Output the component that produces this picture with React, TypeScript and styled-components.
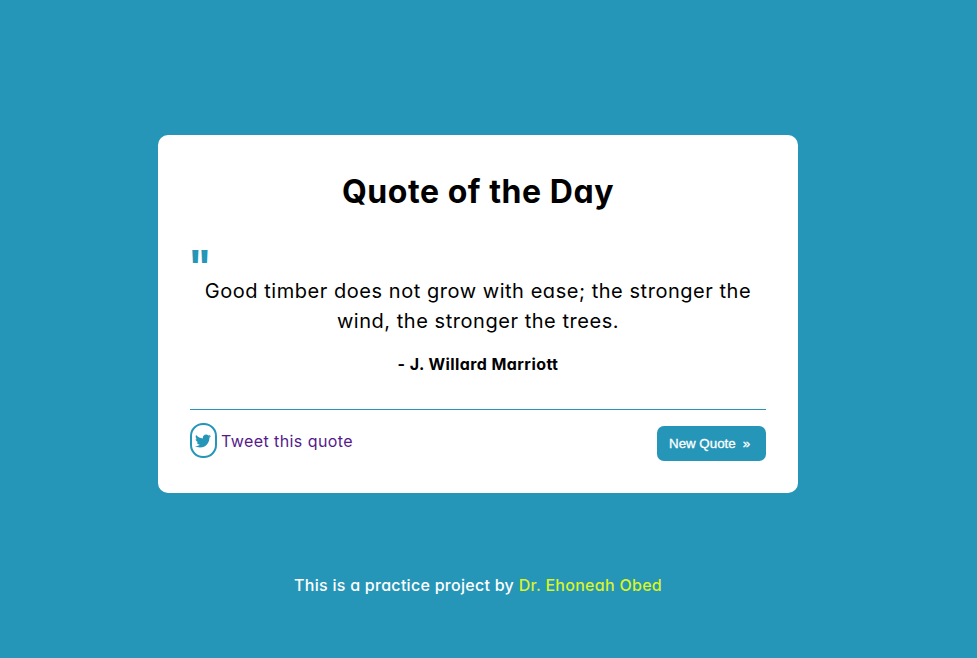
import React from 'react';
import styled, { createGlobalStyle } from 'styled-components';
import { FaTwitter } from 'react-icons/fa';

const teal = '#2596b7';

const GlobalStyle = createGlobalStyle`
  * { box-sizing: border-box; margin: 0; padding: 0; }
  body {
    background: ${teal};
    font-family: Inter, sans-serif;
    font-feature-settings: 'cv11' 1;
    color: #000;
  }
`;

const Page = styled.div`
  display: flex;
  flex-direction: column;
  align-items: center;
  width: 956px;
  height: 658px;
  padding-top: 135px;
`;

const Card = styled.main`
  width: 640px;
  height: 358px;
  padding: 33px 32px 32px;
  background: #fff;
  border-radius: 10px;
`;

const Title = styled.h1`
  font-size: 32px;
  line-height: 48px;
  font-weight: 700;
  letter-spacing: 0.55px;
  text-align: center;
`;

const QuoteMark = styled.div`
  height: 60px;
  margin-left: -2px;
  padding-top: 25px;
  font-size: 43px;
  line-height: 48px;
  font-weight: 650;
  color: ${teal};
`;

const QuoteText = styled.p`
  font-size: 20px;
  line-height: 30px;
  font-weight: 400;
  letter-spacing: 0.54px;
  text-align: center;
`;

const Author = styled.p`
  margin-top: 16px;
  font-size: 16px;
  line-height: 24px;
  font-weight: 650;
  letter-spacing: 0.42px;
  text-align: center;
`;

const Actions = styled.div`
  display: flex;
  align-items: flex-start;
  justify-content: space-between;
  margin-top: 33px;
  padding-top: 13px;
  border-top: 1px solid ${teal};
`;

const TweetLink = styled.a`
  display: flex;
  align-items: center;
  gap: 4px;
  font-size: 16px;
  font-weight: 400;
  letter-spacing: 0.42px;
  color: #551a8b;
  text-decoration: none;
`;

const IconPill = styled.span`
  display: flex;
  align-items: center;
  justify-content: center;
  width: 27px;
  height: 35px;
  padding-right: 1px;
  border: 2px solid ${teal};
  border-radius: 13px;
  color: ${teal};
`;

const NewQuoteButton = styled.button`
  display: flex;
  align-items: center;
  gap: 7px;
  width: 109px;
  height: 35px;
  margin-top: 3px;
  padding-left: 12px;
  border: 0;
  border-radius: 7px;
  background: ${teal};
  color: #fff;
  font: 400 13.333px 'Liberation Sans', sans-serif;
  -webkit-text-stroke: 0.3px #fff;
`;

const Footer = styled.footer`
  margin-top: 80px;
  font-size: 16px;
  line-height: 24px;
  font-weight: 450;
  letter-spacing: 0.28px;
  color: #fff;
`;

const AuthorLink = styled.a`
  color: #d9f427;
  text-decoration: none;
`;

export default function App() {
  return (
    <>
      <GlobalStyle />
      <Page>
        <Card>
          <Title>Quote of the Day</Title>
          <QuoteMark>"</QuoteMark>
          <QuoteText>Good timber does not grow with ease; the stronger the wind, the stronger the trees.</QuoteText>
          <Author>- J. Willard Marriott</Author>
          <Actions>
            <TweetLink href="#">
              <IconPill><FaTwitter size={16} /></IconPill>
              Tweet this quote
            </TweetLink>
            <NewQuoteButton type="button"><span>New Quote</span><span>»</span></NewQuoteButton>
          </Actions>
        </Card>
        <Footer>
          This is a practice project by <AuthorLink href="#">Dr. Ehoneah Obed</AuthorLink>
        </Footer>
      </Page>
    </>
  );
}
